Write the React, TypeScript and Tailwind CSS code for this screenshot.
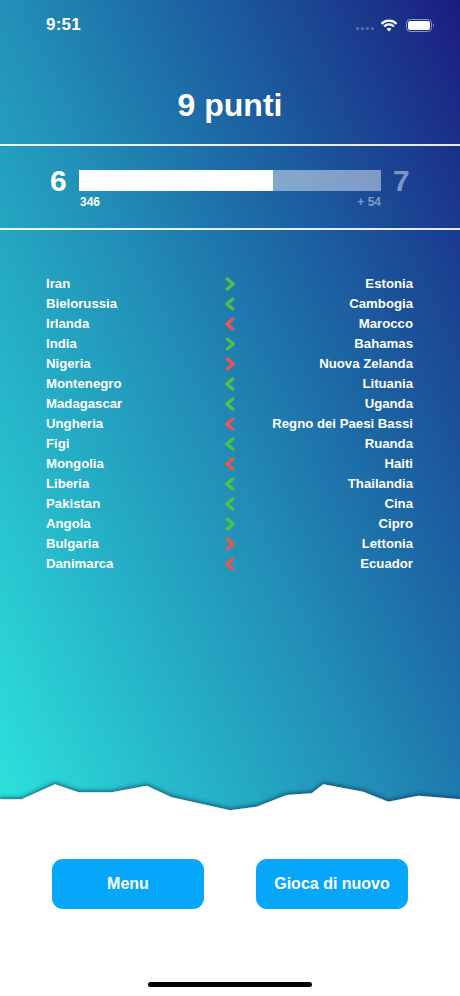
import React from "react";

type Row = { l: string; r: string; dir: "l" | "r"; ok: boolean };

const rows: Row[] = [
  { l: "Iran", r: "Estonia", dir: "r", ok: true },
  { l: "Bielorussia", r: "Cambogia", dir: "l", ok: true },
  { l: "Irlanda", r: "Marocco", dir: "l", ok: false },
  { l: "India", r: "Bahamas", dir: "r", ok: true },
  { l: "Nigeria", r: "Nuova Zelanda", dir: "r", ok: false },
  { l: "Montenegro", r: "Lituania", dir: "l", ok: true },
  { l: "Madagascar", r: "Uganda", dir: "l", ok: true },
  { l: "Ungheria", r: "Regno dei Paesi Bassi", dir: "l", ok: false },
  { l: "Figi", r: "Ruanda", dir: "l", ok: true },
  { l: "Mongolia", r: "Haiti", dir: "l", ok: false },
  { l: "Liberia", r: "Thailandia", dir: "l", ok: true },
  { l: "Pakistan", r: "Cina", dir: "l", ok: true },
  { l: "Angola", r: "Cipro", dir: "r", ok: true },
  { l: "Bulgaria", r: "Lettonia", dir: "r", ok: false },
  { l: "Danimarca", r: "Ecuador", dir: "l", ok: false },
];

function Chevron({ dir, ok }: { dir: "l" | "r"; ok: boolean }) {
  const color = ok ? "#4cc24b" : "#ea5653";
  const pts = dir === "r" ? "2.3,2 8.2,7 2.3,12" : "7.7,2 1.8,7 7.7,12";
  return (
    <svg width="10" height="14" viewBox="0 0 10 14" className="block">
      <polyline
        points={pts}
        fill="none"
        stroke={color}
        strokeWidth="3.4"
        strokeLinecap="round"
        strokeLinejoin="round"
      />
    </svg>
  );
}

export default function App() {
  return (
    <div
      className="relative w-[460px] h-[996px] overflow-hidden flex flex-col bg-gradient-to-tr from-[#31f6e4] via-[#2290b8] to-[#1b1a80] text-white"
      style={{ fontFamily: '"Liberation Sans", Arial, sans-serif' }}
    >
      {/* status bar */}
      <div className="h-[50px] flex items-center justify-between pl-[46px] pr-[25px]">
        <span className="text-[17px] font-bold tracking-[0.2px] mt-[-1px]">9:51</span>
        <div className="flex items-center">
          <div className="flex items-end gap-[2px] mr-[6px] mt-[6px]">
            <span className="w-[3px] h-[3px] rounded-full bg-white/30" />
            <span className="w-[3px] h-[3px] rounded-full bg-white/30" />
            <span className="w-[3px] h-[3px] rounded-full bg-white/30" />
            <span className="w-[3px] h-[3px] rounded-full bg-white/30" />
          </div>
          <svg width="18" height="13" viewBox="0 0 17 12" className="mr-[8px]">
            <path d="M1.4 4.4 A10 10 0 0 1 15.6 4.4" fill="none" stroke="white" strokeWidth="2.2" />
            <path d="M3.9 6.9 A6.5 6.5 0 0 1 13.1 6.9" fill="none" stroke="white" strokeWidth="2.2" />
            <path d="M8.5 11.6 L6.2 9.3 A3.2 3.2 0 0 1 10.8 9.3 Z" fill="white" />
          </svg>
          <svg width="29" height="13" viewBox="0 0 29 13">
            <rect x="0.5" y="0.5" width="25" height="12" rx="3.8" fill="none" stroke="white" strokeOpacity="0.5" />
            <rect x="2" y="2" width="22" height="9" rx="2.3" fill="white" />
            <path d="M27 4.5 C28.2 4.8 28.2 8.2 27 8.5 Z" fill="white" fillOpacity="0.5" />
          </svg>
        </div>
      </div>

      {/* title */}
      <div className="pt-[39px] pb-[23px] text-center text-[32px] leading-[32px] font-bold">9 punti</div>

      <div className="h-[2px] bg-white/90" />

      {/* progress */}
      <div className="h-[82px] pt-[24px] flex justify-center items-start gap-[12px]">
        <div className="h-[21px] leading-[21px] text-[30px] font-bold w-[17px]">6</div>
        <div className="w-[302px] flex flex-col">
          <div className="h-[21px] flex bg-white/45">
            <div className="h-full w-[194px] bg-white" />
          </div>
          <div className="mt-[4px] flex justify-between text-[12px] leading-[14px] font-bold">
            <span className="pl-[1px]">346</span>
            <span className="text-white/45">+ 54</span>
          </div>
        </div>
        <div className="h-[21px] leading-[21px] text-[30px] font-bold w-[17px] text-white/45">7</div>
      </div>

      <div className="h-[2px] bg-white/90" />

      {/* list */}
      <div className="mt-[44px] pl-[46px] pr-[47px] flex flex-col">
        {rows.map((r, i) => (
          <div key={i} className="grid grid-cols-[1fr_auto_1fr] items-center h-[20px] text-[13.2px] font-bold">
            <span>{r.l}</span>
            <Chevron dir={r.dir} ok={r.ok} />
            <span className="text-right">{r.r}</span>
          </div>
        ))}
      </div>

      <div className="flex-1" />

      {/* ridge */}
      <svg width="460" height="36" viewBox="0 0 460 36" className="block overflow-visible">
        <defs>
          <filter id="sh" x="-10%" y="-100%" width="120%" height="300%">
            <feDropShadow dx="0" dy="-1.5" stdDeviation="2.2" floodColor="#082c4a" floodOpacity="0.7" />
          </filter>
        </defs>
        <polygon
          filter="url(#sh)"
          fill="white"
          points="0,23.3 21.7,23.3 55,8.3 78.3,16.3 111.7,16.3 146.7,9.7 171.7,21.3 230,34.3 256.7,30.7 286.7,19 311.7,17.3 323.3,8.3 363.3,15.7 388.3,25.7 418.3,19.7 460,23.3 460,40 0,40"
        />
      </svg>

      {/* bottom */}
      <div className="h-[184px] bg-white flex flex-col">
        <div className="pt-[47px] px-[52px] flex justify-between">
          <button className="w-[152px] h-[50px] rounded-[11px] bg-[#06a6fa] text-white text-[16px] font-bold">
            Menu
          </button>
          <button className="w-[152px] h-[50px] rounded-[11px] bg-[#06a6fa] text-white text-[16px] font-bold">
            Gioca di nuovo
          </button>
        </div>
        <div className="mt-[73px] mx-auto w-[164px] h-[5px] rounded-full bg-black" />
      </div>
    </div>
  );
}
